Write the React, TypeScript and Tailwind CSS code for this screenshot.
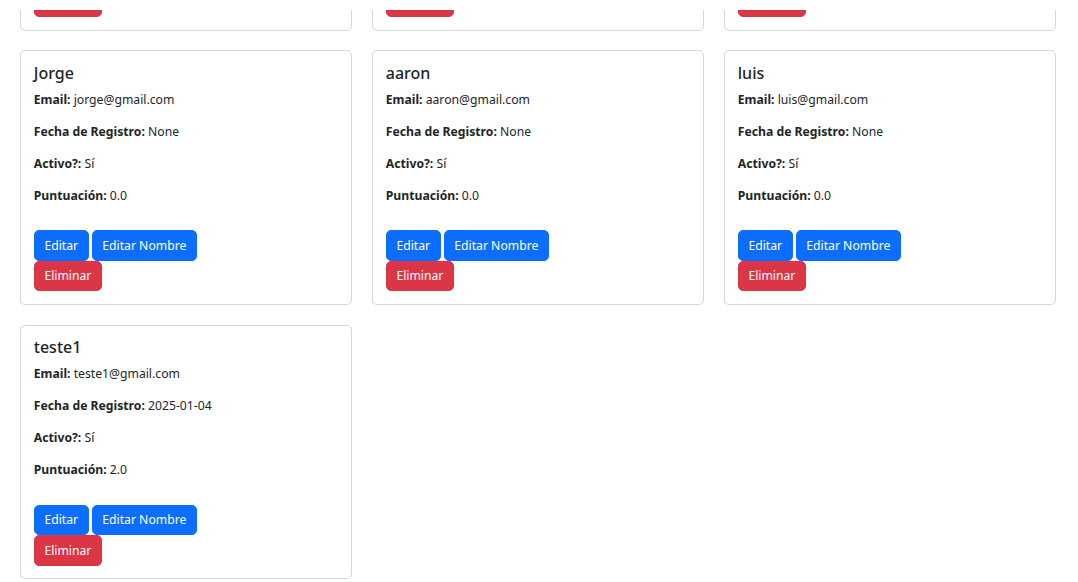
import React from "react";

type User = { name: string; email: string; fecha: string; activo: string; punt: string };

const users: User[] = [
  { name: "Ana", email: "ana@gmail.com", fecha: "None", activo: "Sí", punt: "0.0" },
  { name: "Pedro", email: "pedro@gmail.com", fecha: "None", activo: "Sí", punt: "0.0" },
  { name: "Maria", email: "maria@gmail.com", fecha: "None", activo: "Sí", punt: "0.0" },
  { name: "Jorge", email: "jorge@gmail.com", fecha: "None", activo: "Sí", punt: "0.0" },
  { name: "aaron", email: "aaron@gmail.com", fecha: "None", activo: "Sí", punt: "0.0" },
  { name: "luis", email: "luis@gmail.com", fecha: "None", activo: "Sí", punt: "0.0" },
  { name: "teste1", email: "teste1@gmail.com", fecha: "2025-01-04", activo: "Sí", punt: "2.0" },
];

function Card({ u }: { u: User }) {
  return (
    <div className="rounded-[5px] border border-[#d6d6d6] bg-white p-[12.8px] text-[#212529]">
      <h5 className="mb-[6.4px] text-[16px] font-medium leading-[19.2px]">{u.name}</h5>
      <p className="mb-[12.8px] leading-[19.2px]">
        <strong className="font-bold">Email:</strong> {u.email}
      </p>
      <p className="mb-[12.8px] leading-[19.2px]">
        <strong className="font-bold">Fecha de Registro:</strong> {u.fecha}
      </p>
      <p className="mb-[12.8px] leading-[19.2px]">
        <strong className="font-bold">Activo?:</strong> {u.activo}
      </p>
      <p className="leading-[19.2px]">
        <strong className="font-bold">Puntuación:</strong> {u.punt}
      </p>
      <div className="flex flex-col items-start pt-[25.6px]">
        <div className="flex gap-[3px]">
          <button className="h-[30.4px] rounded-[5px] border border-[#0d6efd] bg-[#0d6efd] px-[9.6px] leading-[19.2px] text-white">
            Editar
          </button>
          <button className="h-[30.4px] rounded-[5px] border border-[#0d6efd] bg-[#0d6efd] px-[9.6px] leading-[19.2px] text-white">
            Editar Nombre
          </button>
        </div>
        <button className="h-[30.4px] rounded-[5px] border border-[#dc3545] bg-[#dc3545] px-[9.6px] leading-[19.2px] text-white">
          Eliminar
        </button>
      </div>
    </div>
  );
}

export default function App() {
  return (
    <div
      className="relative h-[582px] overflow-hidden bg-white text-[12.2px]"
      style={{ fontFamily: '"Noto Sans", "Open Sans", sans-serif' }}
    >
      <div className="absolute left-0 right-0 top-0 z-10 h-[10px] bg-white" />
      <div className="-mt-[224px] grid grid-cols-3 gap-x-5 gap-y-[19.5px] pl-5 pr-[22px]">
        {users.map((u) => (
          <Card key={u.name} u={u} />
        ))}
      </div>
    </div>
  );
}
